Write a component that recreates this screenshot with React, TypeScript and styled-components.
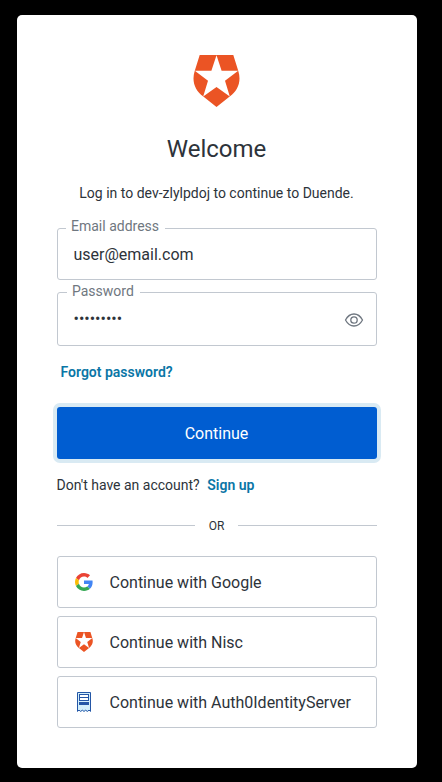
import React from "react";
import styled, { createGlobalStyle } from "styled-components";

const Global = createGlobalStyle`
  *, *::before, *::after { box-sizing: border-box; }
  body { margin: 0; background: #000; font-family: Roboto, "Liberation Sans", sans-serif; color: #2d333a; }
`;

const Page = styled.main`
  height: 782px;
  padding: 15px 25px 14px 17px;
  overflow: hidden;
  background: #000;
`;

const Card = styled.section`
  display: flex;
  flex-direction: column;
  height: 753px;
  padding: 40px 40px 0;
  border-radius: 5px;
  background: #fff;
`;

const Header = styled.header`
  display: flex;
  flex-direction: column;
  align-items: center;
  height: 173px;
  padding-right: 1px;
`;

const Title = styled.h1`
  margin: 27px 0 0;
  font-size: 24px;
  line-height: 30px;
  font-weight: 400;
`;

const Subtitle = styled.p`
  margin: 19px 0 0;
  font-size: 14px;
  line-height: 21px;
  white-space: nowrap;
`;

const Form = styled.form`
  display: flex;
  flex-direction: column;
`;

const Field = styled.div<{ $height: number }>`
  position: relative;
  display: flex;
  align-items: center;
  height: ${(p) => p.$height}px;
  margin-bottom: 12px;
  padding: 0 12px 0 15.5px;
  border: 1px solid #c2c8d0;
  border-radius: 3px;
`;

const Label = styled.label<{ $left: number; $top: number; $width: number }>`
  position: absolute;
  top: ${(p) => p.$top}px;
  left: ${(p) => p.$left}px;
  width: ${(p) => p.$width}px;
  padding-left: 5px;
  background: #fff;
  color: #6f7780;
  font-size: 14px;
  line-height: 20px;
  white-space: nowrap;
`;

const Input = styled.input<{ $drop?: number }>`
  flex: 1;
  min-width: 0;
  margin: 0;
  padding: ${(p) => p.$drop ?? 0}px 0 0;
  border: 0;
  outline: 0;
  background: transparent;
  color: #2d333a;
  font: 400 16px/24px Roboto, sans-serif;
`;

const IconButton = styled.button`
  display: flex;
  padding: 1px 0 0;
  border: 0;
  background: transparent;
`;

const Link = styled.a`
  color: #0a76a6;
  font-size: 14px;
  line-height: 20px;
  font-weight: 600;
  text-decoration: none;
`;

const ForgotRow = styled.div`
  height: 49px;
  padding: 4px 0 0 3.5px;
  line-height: 20px;
`;

const Submit = styled.button`
  height: 52px;
  padding: 2px 1px 0 0;
  border: 0;
  border-radius: 3px;
  background: #005dd1;
  box-shadow: 0 0 0 4px #d9eaf3;
  color: #fff;
  font: 400 16px/24px Roboto, sans-serif;
`;

const Signup = styled.p`
  display: flex;
  gap: 7.5px;
  margin: 16px 0 0 -0.5px;
  font-size: 14px;
  line-height: 20px;
`;

const Divider = styled.div`
  display: flex;
  align-items: center;
  height: 19px;
  margin: 21px 0;
  font-size: 12px;

  &::before, &::after {
    content: "";
    flex: 0 0 138px;
    height: 1px;
    background: #c2c8d0;
  }

  &::after { flex: 1; }
`;

const DividerText = styled.span`
  width: 43px;
  padding-top: 1px;
  text-align: center;
`;

const Providers = styled.div`
  display: flex;
  flex-direction: column;
  gap: 8px;
`;

const Provider = styled.button`
  display: flex;
  align-items: center;
  height: 52px;
  padding: 0 0 0 16px;
  border: 1px solid #c2c8d0;
  border-radius: 3px;
  background: #fff;
  color: #2d333a;
  font: 400 16px/24px Roboto, sans-serif;
`;

const ProviderIcon = styled.span`
  display: flex;
  justify-content: center;
  width: 20px;
  margin-right: 15.5px;
`;

const ProviderName = styled.span`
  padding-top: 2px;
`;

const Shield = ({ width, height }: { width: number; height: number }) => (
  <svg width={width} height={height} viewBox="0 0 47 52" preserveAspectRatio="none">
    <path
      fill="#eb5424"
      d="M6.7 0H40.3L45.3 16C48.5 26 45.2 35.2 36.7 41.5L23.5 52L10.3 41.5C1.8 35.2-1.5 26 1.7 16Z"
    />
    <path
      fill="#fff"
      d="M23.5 .3L28.6 15.8H45.2L32 25.8L36.8 41.6L23.5 32.1L10.2 41.6L15 25.8L1.8 15.8H18.4Z"
    />
  </svg>
);

const EyeIcon = () => (
  <svg width="20" height="16" viewBox="0 0 20 16" fill="none" stroke="#6f7780" strokeWidth="1.3">
    <path d="M1.5 8C3.7 3.9 6.5 2 10 2s6.3 1.9 8.5 6c-2.2 4.1-5 6-8.5 6s-6.3-1.9-8.5-6Z" strokeLinejoin="round" />
    <circle cx="10" cy="8" r="3.2" />
  </svg>
);

const GoogleIcon = () => (
  <svg width="18" height="18" viewBox="0 0 48 48">
    <path fill="#EA4335" d="M24 9.5c3.54 0 6.71 1.22 9.21 3.6l6.85-6.85C35.9 2.38 30.47 0 24 0 14.62 0 6.51 5.38 2.56 13.22l7.98 6.19C12.43 13.72 17.74 9.5 24 9.5z" />
    <path fill="#4285F4" d="M46.98 24.55c0-1.57-.15-3.09-.38-4.55H24v9.02h12.94c-.58 2.96-2.26 5.48-4.78 7.18l7.73 6c4.51-4.18 7.09-10.36 7.09-17.65z" />
    <path fill="#FBBC05" d="M10.53 28.59c-.48-1.45-.76-2.99-.76-4.59s.27-3.14.76-4.59l-7.98-6.19C.92 16.46 0 20.12 0 24c0 3.88.92 7.54 2.56 10.78l7.97-6.19z" />
    <path fill="#34A853" d="M24 48c6.48 0 11.93-2.13 15.89-5.81l-7.73-6c-2.15 1.45-4.92 2.3-8.16 2.3-6.26 0-11.57-4.22-13.47-9.91l-7.98 6.19C6.51 42.62 14.62 48 24 48z" />
  </svg>
);

const ServerIcon = () => (
  <svg width="14" height="20" viewBox="0 0 14 20">
    <path fill="#d3effb" d="M0 0h14v20l-2-1.5-1.7 1.5-1.6-1.5L7 20l-1.7-1.5L3.7 20 2 18.5 0 20Z" />
    <path fill="none" stroke="#2456a6" d="M.5 19.5V.5h13v19" />
    <path fill="none" stroke="#2456a6" d="M.5 19.2l1.5-1 1.7 1.2 1.6-1.2L7 19.4l1.7-1.2 1.6 1.2 1.7-1.2 1.5 1" />
    <rect x="2.5" y="2.5" width="9" height="6" fill="#fff" stroke="#2456a6" />
    <path stroke="#2456a6" d="M2 5.5h10" />
    <rect x="2" y="10" width="10" height="3" fill="#2456a6" />
  </svg>
);

const providers = [
  { name: "Google", icon: <GoogleIcon /> },
  { name: "Nisc", icon: <Shield width={18} height={20} /> },
  { name: "Auth0IdentityServer", icon: <ServerIcon /> },
];

export default function App() {
  return (
    <Page>
      <Global />
      <Card>
        <Header>
          <Shield width={47} height={52} />
          <Title>Welcome</Title>
          <Subtitle>Log in to dev-zlylpdoj to continue to Duende.</Subtitle>
        </Header>
        <Form onSubmit={(e) => e.preventDefault()}>
          <Field $height={52}>
            <Label htmlFor="email" $left={8} $top={-13} $width={99}>Email address</Label>
            <Input id="email" $drop={2} defaultValue="user@email.com" />
          </Field>
          <Field $height={54}>
            <Label htmlFor="password" $left={9} $top={-12} $width={73}>Password</Label>
            <Input id="password" type="password" defaultValue="password1" />
            <IconButton type="button" aria-label="Show password">
              <EyeIcon />
            </IconButton>
          </Field>
          <ForgotRow>
            <Link href="#">Forgot password?</Link>
          </ForgotRow>
          <Submit type="submit">Continue</Submit>
        </Form>
        <Signup>
          Don't have an account? <Link href="#">Sign up</Link>
        </Signup>
        <Divider>
          <DividerText>OR</DividerText>
        </Divider>
        <Providers>
          {providers.map((p) => (
            <Provider key={p.name} type="button">
              <ProviderIcon>{p.icon}</ProviderIcon>
              <ProviderName>Continue with {p.name}</ProviderName>
            </Provider>
          ))}
        </Providers>
      </Card>
    </Page>
  );
}
